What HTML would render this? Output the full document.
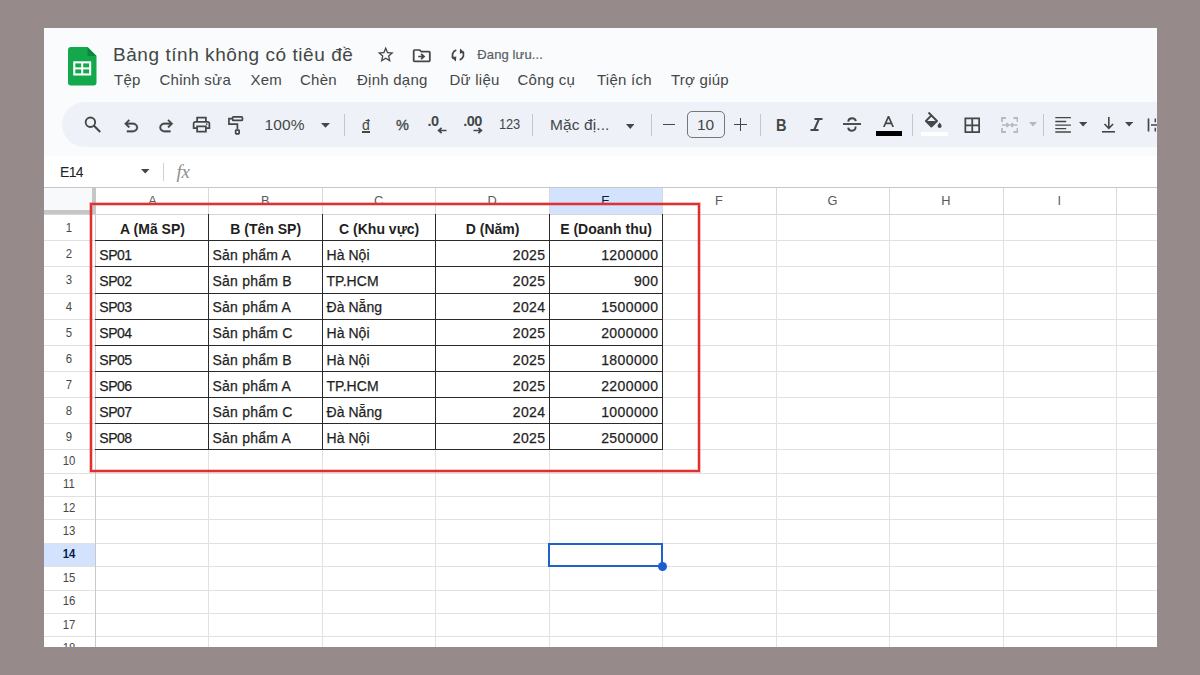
<!DOCTYPE html>
<html><head><meta charset="utf-8"><title>Sheets</title>
<style>
html,body{margin:0;padding:0;width:1200px;height:675px;overflow:hidden;background:#968b8a;font-family:"Liberation Sans", sans-serif;}
.t{position:absolute;white-space:nowrap;font-family:"Liberation Sans", sans-serif;}
.r{position:absolute;}
#clip{position:absolute;left:44px;top:28px;width:1113px;height:619px;overflow:hidden;}
#inner{position:absolute;left:-44px;top:-28px;width:1200px;height:675px;}
</style></head><body>
<div id="clip"><div id="inner">
<div class="r" style="left:44px;top:28px;width:1113px;height:619px;background:#ffffff;"></div>
<div class="r" style="left:44px;top:28px;width:1113px;height:128px;background:#f9fbfd;"></div>
<svg class="r" style="left:68px;top:47px;" width="28.5" height="38.5" viewBox="0 0 28.5 38.5"><path d="M0 3 Q0 0 3 0 H19.5 L28.5 9 V35.5 Q28.5 38.5 25.5 38.5 H3 Q0 38.5 0 35.5 Z" fill="#12a84b"/>
<path d="M19.5 0 L28.5 9 H19.5 Z" fill="#0b8a3c"/>
<rect x="5.2" y="14.3" width="18" height="14.2" fill="#ffffff"/>
<rect x="7.3" y="16.4" width="5.9" height="4" fill="#12a84b"/><rect x="15.2" y="16.4" width="5.9" height="4" fill="#12a84b"/>
<rect x="7.3" y="22.4" width="5.9" height="4" fill="#12a84b"/><rect x="15.2" y="22.4" width="5.9" height="4" fill="#12a84b"/></svg>
<div class="t" style="left:113px;top:44.92px;font-size:19px;line-height:19px;color:#444746;font-weight:400;letter-spacing:0.55px;">Bảng tính không có tiêu đề</div>
<svg class="r" style="left:375.5px;top:45.3px;" width="19.4" height="19.4" viewBox="0 0 24 24"><path fill="#444746" d="M22 9.24l-7.19-.62L12 2 9.19 8.63 2 9.24l5.46 4.73L5.82 21 12 17.27 18.18 21l-1.63-7.03L22 9.24zM12 15.4l-3.76 2.27 1-4.28-3.32-2.88 4.38-.38L12 6.1l1.71 4.04 4.38.38-3.32 2.88 1 4.28L12 15.4z"/></svg>
<svg class="r" style="left:411.1px;top:45.76px" width="21.5" height="19.4" viewBox="0 0 24 24" preserveAspectRatio="none"><path fill="#444746" d="M20 6h-8l-2-2H4c-1.1 0-1.99.9-1.99 2L2 18c0 1.1.9 2 2 2h16c1.1 0 2-.9 2-2V8c0-1.1-.9-2-2-2zm0 12H4V6h5.17l2 2H20v10zm-7.84-6H8v2h4.16l-1.59 1.59L11.99 17 16 13.01 11.99 9l-1.41 1.41L12.16 12z"/></svg>
<svg class="r" style="left:450px;top:48px;" width="16" height="14" viewBox="0 0 16 14"><path d="M6.3 2.2 A5.2 5.2 0 0 0 3.6 10.6 M9.7 11.8 A5.2 5.2 0 0 0 12.4 3.4" fill="none" stroke="#444746" stroke-width="1.8"/><path d="M1.3 9.2 L5.9 13.6 L6.3 8.4 Z M14.7 4.8 L10.1 0.4 L9.7 5.6 Z" fill="#444746"/></svg>
<div class="t" style="left:477.3px;top:48.10px;font-size:13px;line-height:13px;color:#5b5f63;font-weight:400;letter-spacing:0.12px;-webkit-text-stroke:0.2px #5b5f63;">Đang lưu...</div>
<div class="t" style="left:114px;top:72.30px;font-size:15px;line-height:15px;color:#444746;font-weight:400;letter-spacing:0.25px;">Tệp</div>
<div class="t" style="left:159.5px;top:72.30px;font-size:15px;line-height:15px;color:#444746;font-weight:400;letter-spacing:0.25px;">Chỉnh sửa</div>
<div class="t" style="left:250.5px;top:72.30px;font-size:15px;line-height:15px;color:#444746;font-weight:400;letter-spacing:0.25px;">Xem</div>
<div class="t" style="left:300px;top:72.30px;font-size:15px;line-height:15px;color:#444746;font-weight:400;letter-spacing:0.25px;">Chèn</div>
<div class="t" style="left:357px;top:72.30px;font-size:15px;line-height:15px;color:#444746;font-weight:400;letter-spacing:0.25px;">Định dạng</div>
<div class="t" style="left:449.5px;top:72.30px;font-size:15px;line-height:15px;color:#444746;font-weight:400;letter-spacing:0.25px;">Dữ liệu</div>
<div class="t" style="left:517.5px;top:72.30px;font-size:15px;line-height:15px;color:#444746;font-weight:400;letter-spacing:0.25px;">Công cụ</div>
<div class="t" style="left:597px;top:72.30px;font-size:15px;line-height:15px;color:#444746;font-weight:400;letter-spacing:0.25px;">Tiện ích</div>
<div class="t" style="left:671px;top:72.30px;font-size:15px;line-height:15px;color:#444746;font-weight:400;letter-spacing:0.25px;">Trợ giúp</div>
<div class="r" style="left:62px;top:102px;width:1120px;height:45px;border-radius:23px;background:#eef2f8"></div>
<svg class="r" style="left:83px;top:115px;" width="19" height="19" viewBox="0 0 19 19"><circle cx="7.4" cy="7.2" r="4.75" fill="none" stroke="#444746" stroke-width="1.85"/><path d="M10.8 10.6 L17.2 17" stroke="#444746" stroke-width="2.1"/></svg>
<svg class="r" style="left:120.6px;top:115.6px;" width="20.4" height="20.4" viewBox="0 -960 960 960"><path fill="#444746" stroke="#444746" stroke-width="14" d="M280-200v-80h284q63 0 109.5-40T720-420q0-60-46.5-100T564-560H312l104 104-56 56-200-200 200-200 56 56-104 104h252q97 0 166.5 63T800-420q0 94-69.5 157T564-200H280Z"/></svg>
<svg class="r" style="left:155.6px;top:115.6px;" width="20.4" height="20.4" viewBox="0 -960 960 960"><path fill="#444746" stroke="#444746" stroke-width="14" d="M396-200q-97 0-166.5-63T160-420q0-94 69.5-157T396-640h252L544-744l56-56 200 200-200 200-56-56 104-104H396q-63 0-109.5 40T240-420q0 60 46.5 100T396-280h284v80H396Z"/></svg>
<svg class="r" style="left:190.7px;top:114.3px;" width="21" height="21" viewBox="0 -960 960 960"><path fill="#444746" d="M640-640v-120H320v120h-80v-200h480v200h-80Zm-480 80h640-640Zm560 100q17 0 28.5-11.5T760-500q0-17-11.5-28.5T720-540q-17 0-28.5 11.5T680-500q0 17 11.5 28.5T720-460Zm-80 260v-160H320v160h320Zm80 80H240v-160H80v-240q0-51 35-85.5t85-34.5h560q51 0 85.5 34.5T880-520v240H720v160Zm80-240v-160q0-17-11.5-28.5T760-560H200q-17 0-28.5 11.5T160-520v160h80v-80h480v80h80Z"/></svg>
<svg class="r" style="left:226px;top:114px;" width="20" height="24" viewBox="0 0 20 24"><rect x="6.55" y="2.95" width="9.9" height="3.5" rx="1" fill="none" stroke="#444746" stroke-width="1.7"/><path d="M6.55 4.7 H2.95 V10.2 H11.4 V15.2" fill="none" stroke="#444746" stroke-width="1.7"/><rect x="9.65" y="16.05" width="3.5" height="3.8" rx="0.6" fill="none" stroke="#444746" stroke-width="1.7"/></svg>
<div class="t" style="left:264.5px;top:117.38px;font-size:15.5px;line-height:15.5px;color:#444746;font-weight:400;letter-spacing:0.15px;">100%</div>
<svg class="r" style="left:321.2px;top:123px;" width="9" height="4.7" viewBox="0 0 9 4.7"><path d="M0 0 H9 L4.5 4.7 Z" fill="#444746"/></svg>
<div class="r" style="left:344px;top:114px;width:1px;height:22px;background:#c7c7c7;"></div>
<div class="t" style="left:362px;top:118.15px;font-size:14px;line-height:14px;color:#444746;font-weight:400;letter-spacing:0px;">đ</div>
<div class="r" style="left:362px;top:131.2px;width:8.3px;height:1.4px;background:#444746;"></div>
<div class="t" style="left:396px;top:117.73px;font-size:14.5px;line-height:14.5px;color:#444746;font-weight:400;letter-spacing:0px;-webkit-text-stroke:0.35px #444746;">%</div>
<div class="t" style="left:427.5px;top:114.23px;font-size:14.5px;line-height:14.5px;color:#444746;font-weight:700;letter-spacing:-0.6px;">.0</div>
<svg class="r" style="left:437px;top:127px;" width="10" height="7" viewBox="0 0 10 7"><path d="M9.5 3.5 H2 M4.6 0.8 L1.6 3.5 L4.6 6.2" fill="none" stroke="#444746" stroke-width="1.7"/></svg>
<div class="t" style="left:463.2px;top:114.23px;font-size:14.5px;line-height:14.5px;color:#444746;font-weight:700;letter-spacing:-0.5px;">.00</div>
<svg class="r" style="left:472.5px;top:127px;" width="10" height="7" viewBox="0 0 10 7"><path d="M0.5 3.5 H8 M5.4 0.8 L8.4 3.5 L5.4 6.2" fill="none" stroke="#444746" stroke-width="1.7"/></svg>
<div class="t" style="left:499px;top:116.48px;font-size:15.5px;line-height:15.5px;color:#444746;font-weight:400;letter-spacing:-0.2px;transform:scaleX(0.83);transform-origin:0 0;">123</div>
<div class="r" style="left:532px;top:114px;width:1px;height:22px;background:#c7c7c7;"></div>
<div class="t" style="left:550px;top:117.38px;font-size:15.5px;line-height:15.5px;color:#444746;font-weight:400;letter-spacing:0.1px;">Mặc đị...</div>
<svg class="r" style="left:625.5px;top:123.5px;" width="8.5" height="5" viewBox="0 0 8.5 5"><path d="M0 0 H8.5 L4.25 5 Z" fill="#444746"/></svg>
<div class="r" style="left:651px;top:114px;width:1px;height:22px;background:#c7c7c7;"></div>
<div class="r" style="left:663px;top:123.7px;width:11.5px;height:1.6px;background:#444746;"></div>
<div class="r" style="left:687px;top:111px;width:35.5px;height:24.5px;border:1.2px solid #747775;border-radius:5px"></div>
<div class="t" style="left:697px;top:117.38px;font-size:15.5px;line-height:15.5px;color:#444746;font-weight:400;letter-spacing:0px;">10</div>
<div class="r" style="left:734px;top:123.6px;width:13px;height:1.9px;background:#444746;"></div>
<div class="r" style="left:739.6px;top:118px;width:1.9px;height:13px;background:#444746;"></div>
<div class="r" style="left:760px;top:114px;width:1px;height:22px;background:#c7c7c7;"></div>
<div class="t" style="left:776.2px;top:116.61px;font-size:17px;line-height:17px;color:#444746;font-weight:700;letter-spacing:0px;transform:scaleX(0.86);transform-origin:0 0;">B</div>
<svg class="r" style="left:808px;top:116px;" width="17" height="17" viewBox="0 0 17 17"><path d="M6.5 3 H14.5 M2.5 14 H10.5 M11 3 L6.2 14" fill="none" stroke="#444746" stroke-width="2"/></svg>
<svg class="r" style="left:843px;top:117px;" width="18" height="15" viewBox="0 0 18 15"><path d="M0 7 H18" stroke="#444746" stroke-width="1.9"/><path d="M5.2 4.6 Q5.5 1.2 9 1.2 Q12.5 1.2 12.8 4.2 M12.6 9.6 Q12.6 13.8 9 13.8 Q5.4 13.8 5.2 10.6" fill="none" stroke="#444746" stroke-width="1.9"/></svg>
<svg class="r" style="left:883px;top:116px;" width="11" height="11" viewBox="0 0 11 11"><path d="M0.8 11 L5.5 0.5 L10.2 11 M2.6 7.4 H8.4" fill="none" stroke="#444746" stroke-width="1.7"/></svg>
<div class="r" style="left:876px;top:131px;width:26px;height:4.5px;background:#000000;"></div>
<div class="r" style="left:912px;top:114px;width:1px;height:22px;background:#c7c7c7;"></div>
<svg class="r" style="left:920px;top:110px;" width="24" height="20" viewBox="0 0 24 20"><path d="M8.5 2.5 L17 11 L11.4 16.5 L5.9 11 L11.4 5.4" fill="none" stroke="#444746" stroke-width="1.9" stroke-linejoin="round"/><path d="M6.6 11.1 H16.3 L11.4 15.8 Z" fill="#444746"/><path d="M19.6 12.6 Q21.6 15 21.6 15.9 A2 2 0 0 1 17.6 15.9 Q17.6 15 19.6 12.6 Z" fill="#444746"/></svg>
<div class="r" style="left:921.2px;top:131.7px;width:27px;height:4px;background:#ffffff;"></div>
<svg class="r" style="left:963.5px;top:116.5px;" width="16.5" height="16.5" viewBox="0 0 16.5 16.5"><path d="M1.35 1.35 H15.15 V15.15 H1.35 Z M8.25 1.35 V15.15 M1.35 8.25 H15.15" fill="none" stroke="#444746" stroke-width="1.75"/></svg>
<svg class="r" style="left:1000.5px;top:117px;" width="17.5" height="16" viewBox="0 0 17.5 16"><path d="M1 5 V1 H5 M1 11 V15 H5 M16.5 5 V1 H12.5 M16.5 11 V15 H12.5" fill="none" stroke="#b5b8bc" stroke-width="1.8"/><path d="M1 8 H7.5 M5.5 6 L7.8 8 L5.5 10 M16.5 8 H10 M12 6 L9.7 8 L12 10" fill="none" stroke="#b5b8bc" stroke-width="1.6"/></svg>
<svg class="r" style="left:1029px;top:122px;" width="8" height="4.5" viewBox="0 0 8 4.5"><path d="M0 0 H8 L4.0 4.5 Z" fill="#b5b8bc"/></svg>
<div class="r" style="left:1043px;top:114px;width:1px;height:22px;background:#c7c7c7;"></div>
<svg class="r" style="left:1054px;top:116px;" width="18" height="18" viewBox="0 0 18 18"><path d="M1.3 1.6 H16.9 M1.3 5.4 H12.2 M1.3 9.1 H16.9 M1.3 12.6 H12.2 M1.3 16 H16.9" stroke="#444746" stroke-width="1.45"/></svg>
<svg class="r" style="left:1079px;top:122.2px;" width="8.2" height="4.5" viewBox="0 0 8.2 4.5"><path d="M0 0 H8.2 L4.1 4.5 Z" fill="#444746"/></svg>
<svg class="r" style="left:1101px;top:116px;" width="16" height="17" viewBox="0 0 16 17"><path d="M1 15.8 H14" stroke="#444746" stroke-width="1.6"/><path d="M7.8 1.1 V12.2 M3.5 8 L7.8 12.3 L12.1 8" fill="none" stroke="#444746" stroke-width="1.6"/></svg>
<svg class="r" style="left:1125px;top:122.2px;" width="8.2" height="4.5" viewBox="0 0 8.2 4.5"><path d="M0 0 H8.2 L4.1 4.5 Z" fill="#444746"/></svg>
<svg class="r" style="left:1146px;top:117px;" width="14" height="16" viewBox="0 0 14 16"><path d="M2.5 1.5 V14.5" stroke="#444746" stroke-width="1.7"/><path d="M5 8 H12 M9.3 1.5 V5.3 M9.3 10.7 V14.5" fill="none" stroke="#444746" stroke-width="1.5"/></svg>
<div class="t" style="left:60px;top:164.95px;font-size:14px;line-height:14px;color:#202124;font-weight:400;letter-spacing:-0.7px;">E14</div>
<svg class="r" style="left:141px;top:169px;" width="8.5" height="4.5" viewBox="0 0 8.5 4.5"><path d="M0 0 H8.5 L4.25 4.5 Z" fill="#444746"/></svg>
<div class="r" style="left:163px;top:163px;width:1px;height:18px;background:#d0d0d0;"></div>
<div class="t" style="left:176.5px;top:162px;font-family:'Liberation Serif',serif;font-style:italic;font-size:19px;line-height:19px;color:#8c8f93;letter-spacing:-0.3px">fx</div>
<div class="r" style="left:44px;top:187px;width:1113px;height:1px;background:#c7c7c7;"></div>
<div class="r" style="left:44px;top:188px;width:48px;height:22px;background:#f8f9fa;"></div>
<div class="r" style="left:550px;top:188px;width:112px;height:26px;background:#d3e3fd;"></div>
<div class="r" style="left:44px;top:544px;width:51px;height:22px;background:#d3e3fd;"></div>
<div class="r" style="left:208px;top:188px;width:1px;height:459px;background:#e1e1e1;"></div>
<div class="r" style="left:322px;top:188px;width:1px;height:459px;background:#e1e1e1;"></div>
<div class="r" style="left:435px;top:188px;width:1px;height:459px;background:#e1e1e1;"></div>
<div class="r" style="left:549px;top:188px;width:1px;height:459px;background:#e1e1e1;"></div>
<div class="r" style="left:662px;top:188px;width:1px;height:459px;background:#e1e1e1;"></div>
<div class="r" style="left:776px;top:188px;width:1px;height:459px;background:#e1e1e1;"></div>
<div class="r" style="left:889px;top:188px;width:1px;height:459px;background:#e1e1e1;"></div>
<div class="r" style="left:1003px;top:188px;width:1px;height:459px;background:#e1e1e1;"></div>
<div class="r" style="left:1116px;top:188px;width:1px;height:459px;background:#e1e1e1;"></div>
<div class="r" style="left:208px;top:188px;width:1px;height:26px;background:#d9d9d9;"></div>
<div class="r" style="left:322px;top:188px;width:1px;height:26px;background:#d9d9d9;"></div>
<div class="r" style="left:435px;top:188px;width:1px;height:26px;background:#d9d9d9;"></div>
<div class="r" style="left:549px;top:188px;width:1px;height:26px;background:#d9d9d9;"></div>
<div class="r" style="left:662px;top:188px;width:1px;height:26px;background:#d9d9d9;"></div>
<div class="r" style="left:776px;top:188px;width:1px;height:26px;background:#d9d9d9;"></div>
<div class="r" style="left:889px;top:188px;width:1px;height:26px;background:#d9d9d9;"></div>
<div class="r" style="left:1003px;top:188px;width:1px;height:26px;background:#d9d9d9;"></div>
<div class="r" style="left:1116px;top:188px;width:1px;height:26px;background:#d9d9d9;"></div>
<div class="r" style="left:44px;top:240px;width:1113px;height:1px;background:#e1e1e1;"></div>
<div class="r" style="left:44px;top:266px;width:1113px;height:1px;background:#e1e1e1;"></div>
<div class="r" style="left:44px;top:293px;width:1113px;height:1px;background:#e1e1e1;"></div>
<div class="r" style="left:44px;top:319px;width:1113px;height:1px;background:#e1e1e1;"></div>
<div class="r" style="left:44px;top:345px;width:1113px;height:1px;background:#e1e1e1;"></div>
<div class="r" style="left:44px;top:371px;width:1113px;height:1px;background:#e1e1e1;"></div>
<div class="r" style="left:44px;top:397px;width:1113px;height:1px;background:#e1e1e1;"></div>
<div class="r" style="left:44px;top:423px;width:1113px;height:1px;background:#e1e1e1;"></div>
<div class="r" style="left:44px;top:449px;width:1113px;height:1px;background:#e1e1e1;"></div>
<div class="r" style="left:44px;top:473px;width:1113px;height:1px;background:#e1e1e1;"></div>
<div class="r" style="left:44px;top:496px;width:1113px;height:1px;background:#e1e1e1;"></div>
<div class="r" style="left:44px;top:519px;width:1113px;height:1px;background:#e1e1e1;"></div>
<div class="r" style="left:44px;top:543px;width:1113px;height:1px;background:#e1e1e1;"></div>
<div class="r" style="left:44px;top:566px;width:1113px;height:1px;background:#e1e1e1;"></div>
<div class="r" style="left:44px;top:590px;width:1113px;height:1px;background:#e1e1e1;"></div>
<div class="r" style="left:44px;top:613px;width:1113px;height:1px;background:#e1e1e1;"></div>
<div class="r" style="left:44px;top:636px;width:1113px;height:1px;background:#e1e1e1;"></div>
<div class="r" style="left:44px;top:214px;width:1113px;height:1px;background:#d6d6d6;"></div>
<div class="r" style="left:95px;top:214px;width:1px;height:433px;background:#c9c9c9;"></div>
<div class="r" style="left:91.5px;top:188px;width:4.5px;height:26px;background:#c4c7c5;"></div>
<div class="r" style="left:44px;top:210px;width:50px;height:4.2px;background:#c4c7c5;"></div>
<div class="t" style="left:132.5px;width:40px;top:194.96px;font-size:12.8px;line-height:12.8px;color:#565a5e;font-weight:400;letter-spacing:0px;text-align:center;">A</div>
<div class="t" style="left:245.22500000000002px;width:40px;top:194.96px;font-size:12.8px;line-height:12.8px;color:#565a5e;font-weight:400;letter-spacing:0px;text-align:center;">B</div>
<div class="t" style="left:358.67499999999995px;width:40px;top:194.96px;font-size:12.8px;line-height:12.8px;color:#565a5e;font-weight:400;letter-spacing:0px;text-align:center;">C</div>
<div class="t" style="left:472.125px;width:40px;top:194.96px;font-size:12.8px;line-height:12.8px;color:#565a5e;font-weight:400;letter-spacing:0px;text-align:center;">D</div>
<div class="t" style="left:585.575px;width:40px;top:194.96px;font-size:12.8px;line-height:12.8px;color:#0a1f44;font-weight:400;letter-spacing:0px;text-align:center;">E</div>
<div class="t" style="left:699.025px;width:40px;top:194.96px;font-size:12.8px;line-height:12.8px;color:#565a5e;font-weight:400;letter-spacing:0px;text-align:center;">F</div>
<div class="t" style="left:812.475px;width:40px;top:194.96px;font-size:12.8px;line-height:12.8px;color:#565a5e;font-weight:400;letter-spacing:0px;text-align:center;">G</div>
<div class="t" style="left:925.925px;width:40px;top:194.96px;font-size:12.8px;line-height:12.8px;color:#565a5e;font-weight:400;letter-spacing:0px;text-align:center;">H</div>
<div class="t" style="left:1039.375px;width:40px;top:194.96px;font-size:12.8px;line-height:12.8px;color:#565a5e;font-weight:400;letter-spacing:0px;text-align:center;">I</div>
<div class="t" style="left:48.8px;width:40px;top:221.23px;font-size:13.5px;line-height:13.5px;color:#444746;font-weight:400;letter-spacing:0px;text-align:center;transform:scaleX(0.84);">1</div>
<div class="t" style="left:48.8px;width:40px;top:247.35px;font-size:13.5px;line-height:13.5px;color:#444746;font-weight:400;letter-spacing:0px;text-align:center;transform:scaleX(0.84);">2</div>
<div class="t" style="left:48.8px;width:40px;top:273.47px;font-size:13.5px;line-height:13.5px;color:#444746;font-weight:400;letter-spacing:0px;text-align:center;transform:scaleX(0.84);">3</div>
<div class="t" style="left:48.8px;width:40px;top:299.59px;font-size:13.5px;line-height:13.5px;color:#444746;font-weight:400;letter-spacing:0px;text-align:center;transform:scaleX(0.84);">4</div>
<div class="t" style="left:48.8px;width:40px;top:325.71px;font-size:13.5px;line-height:13.5px;color:#444746;font-weight:400;letter-spacing:0px;text-align:center;transform:scaleX(0.84);">5</div>
<div class="t" style="left:48.8px;width:40px;top:351.83px;font-size:13.5px;line-height:13.5px;color:#444746;font-weight:400;letter-spacing:0px;text-align:center;transform:scaleX(0.84);">6</div>
<div class="t" style="left:48.8px;width:40px;top:377.95px;font-size:13.5px;line-height:13.5px;color:#444746;font-weight:400;letter-spacing:0px;text-align:center;transform:scaleX(0.84);">7</div>
<div class="t" style="left:48.8px;width:40px;top:404.07px;font-size:13.5px;line-height:13.5px;color:#444746;font-weight:400;letter-spacing:0px;text-align:center;transform:scaleX(0.84);">8</div>
<div class="t" style="left:48.8px;width:40px;top:430.19px;font-size:13.5px;line-height:13.5px;color:#444746;font-weight:400;letter-spacing:0px;text-align:center;transform:scaleX(0.84);">9</div>
<div class="t" style="left:48.8px;width:40px;top:453.85px;font-size:13.5px;line-height:13.5px;color:#444746;font-weight:400;letter-spacing:0px;text-align:center;transform:scaleX(0.84);">10</div>
<div class="t" style="left:48.8px;width:40px;top:477.24px;font-size:13.5px;line-height:13.5px;color:#444746;font-weight:400;letter-spacing:0px;text-align:center;transform:scaleX(0.84);">11</div>
<div class="t" style="left:48.8px;width:40px;top:500.62px;font-size:13.5px;line-height:13.5px;color:#444746;font-weight:400;letter-spacing:0px;text-align:center;transform:scaleX(0.84);">12</div>
<div class="t" style="left:48.8px;width:40px;top:524.00px;font-size:13.5px;line-height:13.5px;color:#444746;font-weight:400;letter-spacing:0px;text-align:center;transform:scaleX(0.84);">13</div>
<div class="t" style="left:48.8px;width:40px;top:547.38px;font-size:13.5px;line-height:13.5px;color:#041e49;font-weight:700;letter-spacing:0px;text-align:center;transform:scaleX(0.84);">14</div>
<div class="t" style="left:48.8px;width:40px;top:570.76px;font-size:13.5px;line-height:13.5px;color:#444746;font-weight:400;letter-spacing:0px;text-align:center;transform:scaleX(0.84);">15</div>
<div class="t" style="left:48.8px;width:40px;top:594.14px;font-size:13.5px;line-height:13.5px;color:#444746;font-weight:400;letter-spacing:0px;text-align:center;transform:scaleX(0.84);">16</div>
<div class="t" style="left:48.8px;width:40px;top:617.52px;font-size:13.5px;line-height:13.5px;color:#444746;font-weight:400;letter-spacing:0px;text-align:center;transform:scaleX(0.84);">17</div>
<div class="t" style="left:48.8px;width:40px;top:640.90px;font-size:13.5px;line-height:13.5px;color:#444746;font-weight:400;letter-spacing:0px;text-align:center;transform:scaleX(0.84);">18</div>
<div class="t" style="left:96.0px;width:113px;top:222.01px;font-size:14px;line-height:14px;color:#1f1f1f;font-weight:700;letter-spacing:0px;text-align:center;">A (Mã SP)</div>
<div class="t" style="left:209.22500000000002px;width:113px;top:222.01px;font-size:14px;line-height:14px;color:#1f1f1f;font-weight:700;letter-spacing:0px;text-align:center;">B (Tên SP)</div>
<div class="t" style="left:322.67499999999995px;width:113px;top:222.01px;font-size:14px;line-height:14px;color:#1f1f1f;font-weight:700;letter-spacing:0px;text-align:center;">C (Khu vực)</div>
<div class="t" style="left:436.125px;width:113px;top:222.01px;font-size:14px;line-height:14px;color:#1f1f1f;font-weight:700;letter-spacing:0px;text-align:center;">D (Năm)</div>
<div class="t" style="left:549.575px;width:113px;top:222.01px;font-size:14px;line-height:14px;color:#1f1f1f;font-weight:700;letter-spacing:0px;text-align:center;">E (Doanh thu)</div>
<div class="t" style="left:99.3px;top:248.13px;font-size:14px;line-height:14px;color:#1f1f1f;font-weight:400;letter-spacing:-0.5px;-webkit-text-stroke:0.25px #1f1f1f;">SP01</div>
<div class="t" style="left:212.5px;top:248.13px;font-size:14px;line-height:14px;color:#1f1f1f;font-weight:400;letter-spacing:0.22px;-webkit-text-stroke:0.25px #1f1f1f;">Sản phẩm A</div>
<div class="t" style="left:326.5px;top:248.13px;font-size:14px;line-height:14px;color:#1f1f1f;font-weight:400;letter-spacing:0.05px;-webkit-text-stroke:0.25px #1f1f1f;">Hà Nội</div>
<div class="t" style="right:654.5px;top:248.13px;font-size:14px;line-height:14px;color:#1f1f1f;font-weight:400;letter-spacing:0.4px;text-align:right;-webkit-text-stroke:0.25px #1f1f1f;">2025</div>
<div class="t" style="right:541.5px;top:248.13px;font-size:14px;line-height:14px;color:#1f1f1f;font-weight:400;letter-spacing:0.4px;text-align:right;-webkit-text-stroke:0.25px #1f1f1f;">1200000</div>
<div class="t" style="left:99.3px;top:274.25px;font-size:14px;line-height:14px;color:#1f1f1f;font-weight:400;letter-spacing:-0.5px;-webkit-text-stroke:0.25px #1f1f1f;">SP02</div>
<div class="t" style="left:212.5px;top:274.25px;font-size:14px;line-height:14px;color:#1f1f1f;font-weight:400;letter-spacing:0.22px;-webkit-text-stroke:0.25px #1f1f1f;">Sản phẩm B</div>
<div class="t" style="left:326.5px;top:274.25px;font-size:14px;line-height:14px;color:#1f1f1f;font-weight:400;letter-spacing:0.05px;-webkit-text-stroke:0.25px #1f1f1f;">TP.HCM</div>
<div class="t" style="right:654.5px;top:274.25px;font-size:14px;line-height:14px;color:#1f1f1f;font-weight:400;letter-spacing:0.4px;text-align:right;-webkit-text-stroke:0.25px #1f1f1f;">2025</div>
<div class="t" style="right:541.5px;top:274.25px;font-size:14px;line-height:14px;color:#1f1f1f;font-weight:400;letter-spacing:0.4px;text-align:right;-webkit-text-stroke:0.25px #1f1f1f;">900</div>
<div class="t" style="left:99.3px;top:300.37px;font-size:14px;line-height:14px;color:#1f1f1f;font-weight:400;letter-spacing:-0.5px;-webkit-text-stroke:0.25px #1f1f1f;">SP03</div>
<div class="t" style="left:212.5px;top:300.37px;font-size:14px;line-height:14px;color:#1f1f1f;font-weight:400;letter-spacing:0.22px;-webkit-text-stroke:0.25px #1f1f1f;">Sản phẩm A</div>
<div class="t" style="left:326.5px;top:300.37px;font-size:14px;line-height:14px;color:#1f1f1f;font-weight:400;letter-spacing:0.05px;-webkit-text-stroke:0.25px #1f1f1f;">Đà Nẵng</div>
<div class="t" style="right:654.5px;top:300.37px;font-size:14px;line-height:14px;color:#1f1f1f;font-weight:400;letter-spacing:0.4px;text-align:right;-webkit-text-stroke:0.25px #1f1f1f;">2024</div>
<div class="t" style="right:541.5px;top:300.37px;font-size:14px;line-height:14px;color:#1f1f1f;font-weight:400;letter-spacing:0.4px;text-align:right;-webkit-text-stroke:0.25px #1f1f1f;">1500000</div>
<div class="t" style="left:99.3px;top:326.49px;font-size:14px;line-height:14px;color:#1f1f1f;font-weight:400;letter-spacing:-0.5px;-webkit-text-stroke:0.25px #1f1f1f;">SP04</div>
<div class="t" style="left:212.5px;top:326.49px;font-size:14px;line-height:14px;color:#1f1f1f;font-weight:400;letter-spacing:0.22px;-webkit-text-stroke:0.25px #1f1f1f;">Sản phẩm C</div>
<div class="t" style="left:326.5px;top:326.49px;font-size:14px;line-height:14px;color:#1f1f1f;font-weight:400;letter-spacing:0.05px;-webkit-text-stroke:0.25px #1f1f1f;">Hà Nội</div>
<div class="t" style="right:654.5px;top:326.49px;font-size:14px;line-height:14px;color:#1f1f1f;font-weight:400;letter-spacing:0.4px;text-align:right;-webkit-text-stroke:0.25px #1f1f1f;">2025</div>
<div class="t" style="right:541.5px;top:326.49px;font-size:14px;line-height:14px;color:#1f1f1f;font-weight:400;letter-spacing:0.4px;text-align:right;-webkit-text-stroke:0.25px #1f1f1f;">2000000</div>
<div class="t" style="left:99.3px;top:352.61px;font-size:14px;line-height:14px;color:#1f1f1f;font-weight:400;letter-spacing:-0.5px;-webkit-text-stroke:0.25px #1f1f1f;">SP05</div>
<div class="t" style="left:212.5px;top:352.61px;font-size:14px;line-height:14px;color:#1f1f1f;font-weight:400;letter-spacing:0.22px;-webkit-text-stroke:0.25px #1f1f1f;">Sản phẩm B</div>
<div class="t" style="left:326.5px;top:352.61px;font-size:14px;line-height:14px;color:#1f1f1f;font-weight:400;letter-spacing:0.05px;-webkit-text-stroke:0.25px #1f1f1f;">Hà Nội</div>
<div class="t" style="right:654.5px;top:352.61px;font-size:14px;line-height:14px;color:#1f1f1f;font-weight:400;letter-spacing:0.4px;text-align:right;-webkit-text-stroke:0.25px #1f1f1f;">2025</div>
<div class="t" style="right:541.5px;top:352.61px;font-size:14px;line-height:14px;color:#1f1f1f;font-weight:400;letter-spacing:0.4px;text-align:right;-webkit-text-stroke:0.25px #1f1f1f;">1800000</div>
<div class="t" style="left:99.3px;top:378.73px;font-size:14px;line-height:14px;color:#1f1f1f;font-weight:400;letter-spacing:-0.5px;-webkit-text-stroke:0.25px #1f1f1f;">SP06</div>
<div class="t" style="left:212.5px;top:378.73px;font-size:14px;line-height:14px;color:#1f1f1f;font-weight:400;letter-spacing:0.22px;-webkit-text-stroke:0.25px #1f1f1f;">Sản phẩm A</div>
<div class="t" style="left:326.5px;top:378.73px;font-size:14px;line-height:14px;color:#1f1f1f;font-weight:400;letter-spacing:0.05px;-webkit-text-stroke:0.25px #1f1f1f;">TP.HCM</div>
<div class="t" style="right:654.5px;top:378.73px;font-size:14px;line-height:14px;color:#1f1f1f;font-weight:400;letter-spacing:0.4px;text-align:right;-webkit-text-stroke:0.25px #1f1f1f;">2025</div>
<div class="t" style="right:541.5px;top:378.73px;font-size:14px;line-height:14px;color:#1f1f1f;font-weight:400;letter-spacing:0.4px;text-align:right;-webkit-text-stroke:0.25px #1f1f1f;">2200000</div>
<div class="t" style="left:99.3px;top:404.85px;font-size:14px;line-height:14px;color:#1f1f1f;font-weight:400;letter-spacing:-0.5px;-webkit-text-stroke:0.25px #1f1f1f;">SP07</div>
<div class="t" style="left:212.5px;top:404.85px;font-size:14px;line-height:14px;color:#1f1f1f;font-weight:400;letter-spacing:0.22px;-webkit-text-stroke:0.25px #1f1f1f;">Sản phẩm C</div>
<div class="t" style="left:326.5px;top:404.85px;font-size:14px;line-height:14px;color:#1f1f1f;font-weight:400;letter-spacing:0.05px;-webkit-text-stroke:0.25px #1f1f1f;">Đà Nẵng</div>
<div class="t" style="right:654.5px;top:404.85px;font-size:14px;line-height:14px;color:#1f1f1f;font-weight:400;letter-spacing:0.4px;text-align:right;-webkit-text-stroke:0.25px #1f1f1f;">2024</div>
<div class="t" style="right:541.5px;top:404.85px;font-size:14px;line-height:14px;color:#1f1f1f;font-weight:400;letter-spacing:0.4px;text-align:right;-webkit-text-stroke:0.25px #1f1f1f;">1000000</div>
<div class="t" style="left:99.3px;top:430.97px;font-size:14px;line-height:14px;color:#1f1f1f;font-weight:400;letter-spacing:-0.5px;-webkit-text-stroke:0.25px #1f1f1f;">SP08</div>
<div class="t" style="left:212.5px;top:430.97px;font-size:14px;line-height:14px;color:#1f1f1f;font-weight:400;letter-spacing:0.22px;-webkit-text-stroke:0.25px #1f1f1f;">Sản phẩm A</div>
<div class="t" style="left:326.5px;top:430.97px;font-size:14px;line-height:14px;color:#1f1f1f;font-weight:400;letter-spacing:0.05px;-webkit-text-stroke:0.25px #1f1f1f;">Hà Nội</div>
<div class="t" style="right:654.5px;top:430.97px;font-size:14px;line-height:14px;color:#1f1f1f;font-weight:400;letter-spacing:0.4px;text-align:right;-webkit-text-stroke:0.25px #1f1f1f;">2025</div>
<div class="t" style="right:541.5px;top:430.97px;font-size:14px;line-height:14px;color:#1f1f1f;font-weight:400;letter-spacing:0.4px;text-align:right;-webkit-text-stroke:0.25px #1f1f1f;">2500000</div>
<div class="r" style="left:208px;top:214px;width:1.3px;height:236px;background:#2a2a2a;"></div>
<div class="r" style="left:322px;top:214px;width:1.3px;height:236px;background:#2a2a2a;"></div>
<div class="r" style="left:435px;top:214px;width:1.3px;height:236px;background:#2a2a2a;"></div>
<div class="r" style="left:549px;top:214px;width:1.3px;height:236px;background:#2a2a2a;"></div>
<div class="r" style="left:662px;top:214px;width:1.3px;height:236px;background:#2a2a2a;"></div>
<div class="r" style="left:95px;top:240px;width:568px;height:1.3px;background:#2a2a2a;"></div>
<div class="r" style="left:95px;top:266px;width:568px;height:1.3px;background:#2a2a2a;"></div>
<div class="r" style="left:95px;top:293px;width:568px;height:1.3px;background:#2a2a2a;"></div>
<div class="r" style="left:95px;top:319px;width:568px;height:1.3px;background:#2a2a2a;"></div>
<div class="r" style="left:95px;top:345px;width:568px;height:1.3px;background:#2a2a2a;"></div>
<div class="r" style="left:95px;top:371px;width:568px;height:1.3px;background:#2a2a2a;"></div>
<div class="r" style="left:95px;top:397px;width:568px;height:1.3px;background:#2a2a2a;"></div>
<div class="r" style="left:95px;top:423px;width:568px;height:1.3px;background:#2a2a2a;"></div>
<div class="r" style="left:95px;top:449px;width:568px;height:1.3px;background:#2a2a2a;"></div>
<div class="r" style="left:90px;top:203px;width:606px;height:264.5px;border:2px solid #de3232;box-shadow:0 0 0 1px rgba(230,70,70,0.35), inset 0 0 0 1px rgba(230,70,70,0.3)"></div>
<div class="r" style="left:548px;top:543px;width:115px;height:24px;border:2px solid #1f63c9;box-sizing:border-box"></div>
<div class="r" style="left:657.5px;top:561.9000000000001px;width:9.6px;height:9.6px;border-radius:50%;background:#1a5fd0"></div>
</div></div>
</body></html>
